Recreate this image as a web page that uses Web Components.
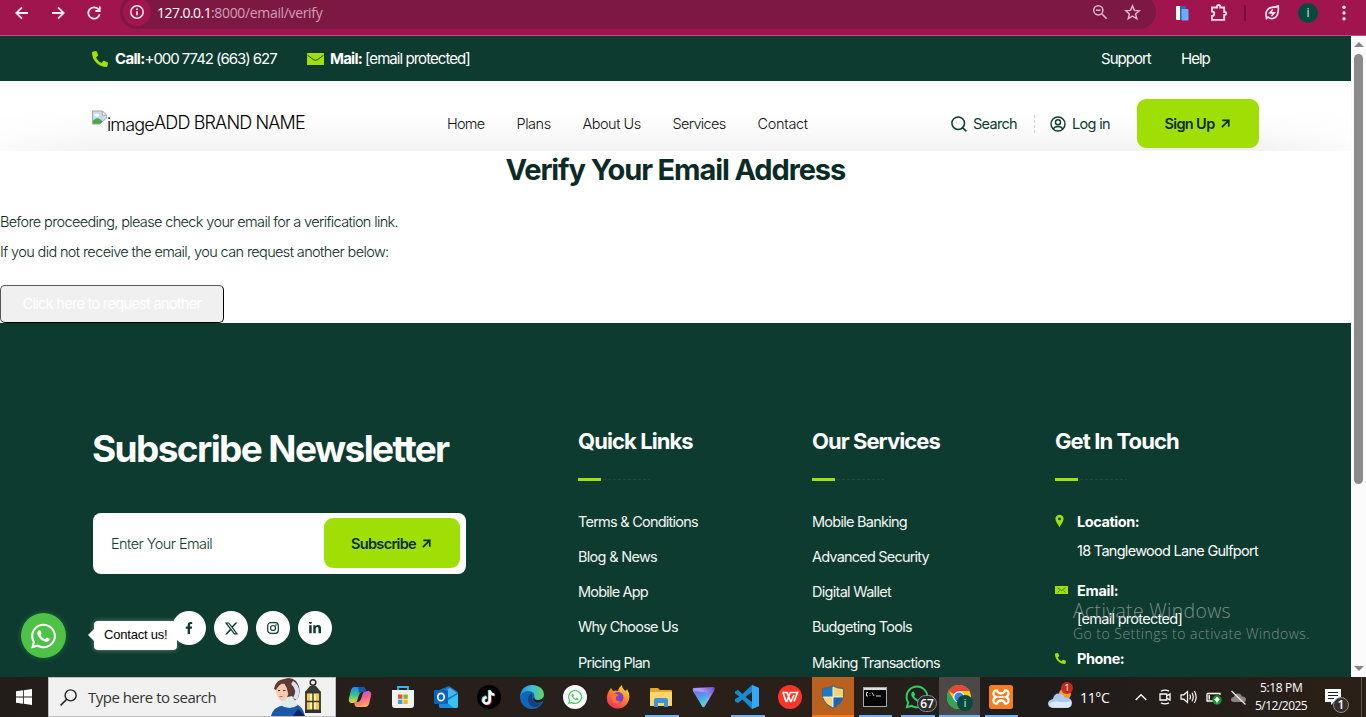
<!DOCTYPE html>
<html lang="en">
<head>
<meta charset="utf-8">
<title>Verify Your Email Address</title>
<style>
body{margin:0;width:1366px;height:717px;overflow:hidden;display:flex;flex-direction:column;font-family:Inter,"Liberation Sans",sans-serif;font-size:15px;color:#0b2b26}
main{display:flex;height:641px}
</style>
</head>
<body>
<browser-bar></browser-bar>
<main>
  <site-page></site-page>
  <scroll-rail></scroll-rail>
</main>
<task-bar></task-bar>
<script>
const WA='<path fill="currentColor" d="M380.9 97.1C339 55.1 283.2 32 223.9 32c-122.4 0-222 99.6-222 222 0 39.1 10.2 77.3 29.6 111L0 480l117.7-30.9c32.4 17.7 68.9 27 106.1 27h.1c122.3 0 224.1-99.6 224.1-222 0-59.3-25.2-115-67.1-157zm-157 341.6c-33.2 0-65.7-8.9-94-25.7l-6.7-4-69.8 18.3L72 359.2l-4.4-7c-18.5-29.4-28.2-63.3-28.2-98.2 0-101.7 82.8-184.5 184.6-184.5 49.3 0 95.6 19.2 130.4 54.1 34.8 34.9 56.2 81.2 56.1 130.5 0 101.8-84.9 184.6-186.6 184.6zm101.2-138.2c-5.5-2.8-32.8-16.2-37.9-18-5.1-1.9-8.8-2.8-12.5 2.8-3.7 5.6-14.3 18-17.6 21.8-3.2 3.7-6.5 4.2-12 1.4-32.6-16.3-54-29.1-75.5-66-5.7-9.8 5.7-9.1 16.3-30.3 1.8-3.7.9-6.9-.5-9.7-1.4-2.8-12.5-30.1-17.1-41.2-4.5-10.8-9.1-9.3-12.5-9.5-3.2-.2-6.9-.2-10.6-.2-3.7 0-9.7 1.4-14.8 6.9-5.1 5.6-19.4 19-19.4 46.3 0 27.3 19.9 53.7 22.6 57.4 2.8 3.7 39.1 59.7 94.8 83.8 35.2 15.2 49 16.5 66.6 13.9 10.7-1.6 32.8-13.4 37.4-26.4 4.6-13 4.6-24.1 3.2-26.4-1.3-2.5-5-3.9-10.5-6.6z"/>';
const line=(d,w=2)=>`<path d="${d}" fill="none" stroke="currentColor" stroke-width="${w}"/>`;
/* name: [viewBox, markup] */
const ICONS={
  back:['0 0 16 16',line('M14 8H2.5M8 2.3L2.3 8L8 13.7',1.8)],
  fwd:['0 0 16 16',line('M2 8h11.5M8 2.3L13.7 8L8 13.7',1.8)],
  reload:['0 0 16 16',line('M13.6 9.2A5.7 5.7 0 1 1 12.3 4.2L13.6 5.6M13.8 1.6V6H9.4',1.8)],
  info:['0 0 16 16','<circle cx="8" cy="8" r="6.2" fill="none" stroke="currentColor" stroke-width="1.5"/><path d="M8 7.2v4M8 4.4v1.6" stroke="currentColor" stroke-width="1.7"/>'],
  zoomout:['0 0 16 16','<circle cx="6.3" cy="6.3" r="4.6" fill="none" stroke="currentColor" stroke-width="1.5"/><path d="M4 6.3h4.6M9.7 9.7l5 5" stroke="currentColor" stroke-width="1.6"/>'],
  star:['0 0 16 16',line('M8 1.8L9.8 6L14.4 6.4L10.9 9.4L12 13.9L8 11.5L4 13.9L5.1 9.4L1.6 6.4L6.2 6Z',1.4)],
  pages:['0 0 14 16','<rect x="1" y="1" width="9" height="14" rx="1" fill="#fff"/><path d="M5 1h6v3H7v11H5z" fill="#3566a8"/><rect x="6.5" y="4" width="7" height="11.5" rx="1" fill="#6cabff"/>'],
  puzzle:['0 0 18 18',line('M2 3.5H7V2.6a1.6 1.6 0 0 1 3.2 0V3.5H14.2V8h.6a1.5 1.5 0 0 1 0 3h-.6V15.8H2V12a2 2 0 0 0 0-4.5Z',1.8)],
  leaf:['0 0 18 18',line('M3 15C1 10 3 4 9 3.2Q13 3 16 1.8Q17 12 12 15Q8 17 4.5 14.2L2 16.6',1.9)+line('M9.9 5.6L6.6 9.4h5L8.3 13',1.8)],
  dots:['0 0 4 16','<g fill="currentColor"><circle cx="2" cy="2.3" r="1.7"/><circle cx="2" cy="8" r="1.7"/><circle cx="2" cy="13.7" r="1.7"/></g>'],
  phone:['0 0 512 512','<path transform="matrix(-1 0 0 1 512 0)" fill="currentColor" d="M493.4 24.6l-104-24c-11.3-2.6-22.9 3.3-27.5 13.9l-48 112c-4.2 9.8-1.4 21.3 6.9 28l60.6 49.6c-36 76.7-98.9 140.5-177.2 177.2l-49.6-60.6c-6.8-8.3-18.2-11.1-28-6.9l-112 48C3.9 366.5-2 378.1.6 389.4l24 104C27.1 504.2 36.7 512 48 512c256.1 0 464-207.5 464-464 0-11.2-7.7-20.9-18.6-23.4z"/>'],
  mail:['0 0 17 12','<rect width="17" height="12" rx=".6" fill="currentColor"/><path d="M.5 2.3L6.5 6.6Q8.5 8 10.5 6.6L16.5 2.3" fill="none" stroke="#0d3b30" stroke-width=".9"/>'],
  envelope:['0 0 13 8','<rect width="13" height="8" fill="currentColor"/><path d="M2.5 1.6L6.5 4.6L10.5 1.6M2.5 6.4L4.6 4.6M10.5 6.4L8.4 4.6" fill="none" stroke="#38701f" stroke-width=".9"/>'],
  pin:['0 0 10 14','<path fill="currentColor" fill-rule="evenodd" d="M5 0a4.6 4.6 0 0 1 4.6 4.6C9.600 7.500 6.500 11 5 14C3.500 11 .4 7.500 .4 4.600A4.600 4.600 0 0 1 5 0zM5 3.100a1.600 1.600 0 1 0 0 3.200a1.600 1.600 0 0 0 0-3.200z"/>'],
  broken:['0 0 16 16','<path d="M.5 .5H11L15.500 5V8L8 14.500H.5Z" fill="#c6d9f5" stroke="#a3a3a3"/><path d="M1 14V11Q5 6 10 10L11 12L8.500 14Z" fill="#4fa83d"/><ellipse cx="5" cy="5" rx="2.700" ry="1.500" fill="#fff"/><path d="M11 .5V5H15.500Z" fill="#fff" stroke="#a3a3a3"/>'],
  search:['0 0 16 16','<circle cx="7.200" cy="7.200" r="6.300" fill="none" stroke="currentColor" stroke-width="1.500"/><path d="M11.700 11.700L15.400 15.400" stroke="currentColor" stroke-width="1.500"/>'],
  user:['0 0 16 16','<g fill="none" stroke="currentColor" stroke-width="1.400"><circle cx="8" cy="8" r="7"/><circle cx="8" cy="6.300" r="2.500"/><path d="M3.300 13Q4.500 10.500 8 10.500T12.700 13"/></g>'],
  arrow:['0 0 10 10',line('M1 9L8.400 1.700M1.500 1.500H8.600V8.500',1.900)],
  fb:['0 0 320 512','<path fill="currentColor" d="M279.140 288l14.220-92.660h-88.910v-60.130c0-25.350 12.420-50.060 52.240-50.060h40.420V6.260S260.430 0 225.360 0c-73.220 0-121.080 44.380-121.080 124.720v70.620H22.890V288h81.390v224h100.170V288z"/>'],
  x:['0 0 24 24','<path fill="currentColor" d="M18.244 2.250h3.308l-7.227 8.260 8.502 11.240H16.170l-5.214-6.817L4.990 21.750H1.680l7.730-8.835L1.254 2.250H8.080l4.713 6.231zm-1.161 17.520h1.833L7.084 4.126H5.117z"/>'],
  insta:['0 0 12 12','<g fill="none" stroke="currentColor" stroke-width="1.200"><rect x=".7" y=".7" width="10.600" height="10.600" rx="3"/><circle cx="6" cy="6" r="2.500"/></g><circle cx="9" cy="3" r=".8" fill="currentColor"/>'],
  linkedin:['0 0 448 448','<path fill="currentColor" d="M100.280 416H7.400V116.900h92.880zM53.790 76.100C24.090 76.100 0 51.500 0 21.800a53.790 53.790 0 0 1 107.580 0c0 29.700-24.100 54.300-53.790 54.300zM447.900 416h-92.680V270.400c0-34.700-.7-79.200-48.290-79.200-48.290 0-55.690 37.700-55.690 76.700V416h-92.780V116.900h89.080v40.800h1.300c12.400-23.500 42.690-48.300 87.880-48.300 94 0 111.280 61.900 111.280 142.300V416z"/>'],
  wa:['0 20 448 470',WA],
  win:['0 0 16 16','<path fill="#fff" d="M0 2.300L7 1.300V7.600H0ZM7.800 1.200L16 0V7.600H7.800ZM0 8.400H7V14.700L0 13.700ZM7.800 8.400H16V16L7.800 14.800Z"/>'],
  find:['0 0 16 16','<circle cx="10" cy="6" r="5.200" fill="none" stroke="#222" stroke-width="1.300"/><path d="M6.300 9.700L.6 15.400" stroke="#222" stroke-width="1.400"/>'],
  nurse:['0 0 64 38','<path d="M10 3Q18 -3 25 3Q31 11 27 20L21 25Q11 22 12 14Z" fill="#5b382f"/><path d="M22 3Q32 9 26 22L22 20Q27 12 20 6Z" fill="#d9e2f4"/><path d="M0 38Q2 29 13 27L22 24Q32 28 34 38Z" fill="#1d57a7"/><path d="M12 20L21 18L27 27Q19 33 9 27Z" fill="#dcebec"/><path d="M5 9Q8 4 14 6L18 12Q17 22 11 23Q7 22 6 16L4.500 15Z" fill="#f4cbb2"/><path d="M3 11Q5 1 14 1Q23 3 21 18L17 15Q16 9 13 5Q8 6 5 12Z" fill="#5f3a31"/><path d="M7 12.500h2M12 12.500h2.500" stroke="#49352f"/><path d="M8.500 18.500h3" stroke="#c95f57"/><path d="M22 38L27 31L34 38Z" fill="#10235f"/><circle cx="42" cy="4.500" r="2.800" fill="none" stroke="#2a2a2a" stroke-width="1.500"/><path d="M34 14L39 8H45L50 14Z" fill="#3a3a3a"/><rect x="35" y="14.500" width="14" height="18" fill="#f5c554" stroke="#333" stroke-width="1.800"/><rect x="39" y="16" width="6" height="15" fill="#fff0a9"/><path d="M42 15V33M35 23.500H49" stroke="#3a3528" stroke-width="1.400"/><rect x="34" y="32" width="16" height="3" fill="#303030"/>'],
  copilot:['0 0 24 24','<defs><linearGradient id="a" x2="0" y2="1"><stop stop-color="#1b8cf0"/><stop offset=".5" stop-color="#35c28a"/><stop offset="1" stop-color="#ffd23a"/></linearGradient><linearGradient id="b" x2=".3" y2="1"><stop stop-color="#9b61e8"/><stop offset=".5" stop-color="#f2599b"/><stop offset="1" stop-color="#ffa45a"/></linearGradient></defs><path d="M6 2H15Q17 2 17.500 5L18 7H14Q12 7 11 10L9 16Q8 18 5 18H3Q0 17 1 13L3 5Q4 2 6 2Z" fill="url(#a)"/><path d="M18 22H9Q7 22 6.500 19L6 17H10Q12 17 13 14L15 8Q16 6 19 6H21Q24 7 23 11L21 19Q20 22 18 22Z" fill="url(#b)"/><path d="M10 2H15Q17 2 18 7H14Q12 7 11 8Z" fill="#1755b5"/>'],
  store:['0 0 24 24','<path d="M7 6V2H17V6" fill="none" stroke="#36b5ef" stroke-width="1.800"/><path d="M1 5H23V20Q23 23 20 23H4Q1 23 1 20Z" fill="#f1f1f1"/><path fill="#e9512c" d="M7 9.500h4.400v4.300H7z"/><path fill="#80b927" d="M12.400 9.500h4.400v4.300h-4.400z"/><path fill="#2ca5e8" d="M7 14.700h4.400V19H7z"/><path fill="#f4b61c" d="M12.400 14.700h4.400V19h-4.400z"/>'],
  outlook:['0 0 24 24','<path d="M5 5L15 1L24 7V21Q24 23 22 23H7Q5 23 5 21Z" fill="#1675cb"/><path d="M8 7L16 3L23 8L14 13Z" fill="#48b8eb"/><path d="M6 20L24 9V21Q24 23 22 23H7Z" fill="#39c0f2"/><path d="M5 12L20 23H7Q5 23 5 21Z" fill="#198edb"/><rect y="5" width="14" height="14" rx="1" fill="#0b65bd"/><ellipse cx="7" cy="12" rx="3.200" ry="3.700" fill="none" stroke="#fff" stroke-width="1.700"/>'],
  tiktok:['0 0 24 24','<circle cx="12" cy="12" r="12" fill="#000"/><g fill="none" stroke-width="2.300"><path d="M12 5V15A3.200 3.200 0 1 1 9 11.700M12 5Q12.500 9 17 9.300" stroke="#25e5e0"/><path d="M13.600 6V16A3.200 3.200 0 1 1 10.400 12.800M13.600 6Q14 10 18 10.300" stroke="#f52d55"/><path d="M12.800 5.500V15.500A3.200 3.200 0 1 1 9.600 12.300M12.800 5.500Q13.300 9.500 17.400 9.700" stroke="#fff"/></g>'],
  edge:['0 0 24 24','<defs><linearGradient id="a"><stop stop-color="#238fdb"/><stop offset=".5" stop-color="#35c1dc"/><stop offset="1" stop-color="#6ad34c"/></linearGradient></defs><circle cx="12" cy="12" r="12" fill="#1267b5"/><path d="M0 11Q2 0 12.500 0Q24 1 24 10Q23 16 16 15Q13 14.500 14.500 12Q15 6 8 6Q3 6 0 11Z" fill="url(#a)"/><path d="M12 8Q5 13 10 20Q16 25 22 18Q13 20 12 12Z" fill="#153f85"/><path d="M14.500 12Q11.500 14 15 17Q19 19 23 16Q24 15 24 12Q20 17 14.500 14Z" fill="#231d1a"/>'],
  wacircle:['0 0 24 24','<circle cx="12" cy="12" r="12" fill="#fff"/><g color="#43cb62" transform="translate(5 4) scale(.0315)">'+WA+'</g>'],
  firefox:['0 0 24 24','<defs><linearGradient id="a" x1=".8" x2=".2" y2="1"><stop stop-color="#ffe43b"/><stop offset=".45" stop-color="#ff8527"/><stop offset="1" stop-color="#f52466"/></linearGradient></defs><path d="M5 3L7 6Q10 5 12 6Q13 2 16 0Q16 4 20 6L21 4Q26 12 21 19Q16 25 8 23Q0 20 1 12Q1 8 5 3Z" fill="url(#a)"/><circle cx="12" cy="12.500" r="5.500" fill="#7542d1"/><path d="M5 10Q8 7 13 10L10 12Q9 17 15 16Q11 20 7 17Z" fill="#ff7433"/>'],
  folder:['0 0 24 24','<path d="M1 4Q1 3 2 3H9L11 5H22Q23 5 23 6V21H1Z" fill="#e8a824"/><path d="M1 7H23V20Q23 21 22 21H2Q1 21 1 20Z" fill="#ffd66d"/><path d="M5 22V15Q5 13 7 13H17Q19 13 19 15V22H15V18H9V22Z" fill="#3e94d7"/>'],
  proton:['0 0 24 24','<defs><linearGradient id="a" x1="1" x2="0" y2=".7"><stop stop-color="#6a45cc"/><stop offset=".5" stop-color="#b29aff"/><stop offset="1" stop-color="#7f9cf5"/></linearGradient><linearGradient id="b" x2=".4" y2="1"><stop stop-color="#7d6ae8"/><stop offset=".5" stop-color="#4f9fe6"/><stop offset="1" stop-color="#3fe0cf"/></linearGradient></defs><path d="M2 3L21 2Q24 2 22 6L13 21Q11 24 9.500 20L1 6Q0 3 2 3Z" fill="url(#a)"/><path d="M1.500 6L15 7.500Q18 8 17 10L11.500 21Q10.500 23 9.500 20Z" fill="url(#b)"/>'],
  vscode:['0 0 24 24','<path d="M17 0L24 3V21L17 24L7.500 14.500L3 18L0 16.500V14L4.500 11.500L0 8.500V6.500L3 5L7.500 9Z" fill="#168bd2"/><path d="M17 7L10.500 12L17 17Z" fill="#241f1c"/><path d="M17 0L24 3V21L17 24Z" fill="#35a9ef"/>'],
  wps:['0 0 24 24','<circle cx="12" cy="12" r="12" fill="#fb3528"/><path d="M4.500 7.500H9L12.500 16.500H13L16 10M5 7.500L8 16.500H8.700L12.300 7.500H19.500L16 16.500" fill="none" stroke="#fff" stroke-width="1.700"/>'],
  shield:['0 0 24 24','<path d="M12 0Q17 3 23 3V10Q22 19 12 24Q2 19 1 10V3Q7 3 12 0Z" fill="#59636b"/><path d="M12 1.500V12H2V4Q7 4 12 1.500Z" fill="#1e78c8"/><path d="M12 1.500V12H22V4Q17 4 12 1.500Z" fill="#f7d370"/><path d="M12 12H2.200Q3.500 18.500 12 22.500Z" fill="#f9d777"/><path d="M12 12H21.800Q20.500 18.500 12 22.500Z" fill="#1867b4"/><path d="M12 2V22M2 12H22" stroke="#fff" stroke-width=".8"/>'],
  cmd:['0 0 24 24','<rect x=".5" y="2.500" width="23" height="19" fill="#050505" stroke="#aaa"/><path d="M1 3H23V5H1Z" fill="#ddd"/><path d="M5 7.500H3.500V11H5M7 8v.7M7 10v.7M9 7.500L11 11M13 11H18" stroke="#eee" fill="none" stroke-width=".9"/>'],
  chrome:['0 0 24 24','<circle cx="12" cy="12" r="12" fill="#f9c91e"/><path d="M12 12L1.600 6A12 12 0 0 1 22.400 6H12Z" fill="#e7463b"/><path d="M12 12V24A12 12 0 0 1 1.600 6L7 15Z" fill="#31a457"/><circle cx="12" cy="12" r="5.800" fill="#fff"/><circle cx="12" cy="12" r="4.600" fill="#3c80ee"/>'],
  xampp:['0 0 24 24','<rect width="24" height="24" rx="2.500" fill="#f57e20"/><path d="M8 5.500Q4.500 5 4.500 8.500Q4.500 11 7 12Q4.500 13 4.500 15.500Q4.500 19 8 18.500Q9 15.500 12 15.500T16 18.500Q19.500 19 19.500 15.500Q19.500 13 17 12Q19.500 11 19.500 8.500Q19.500 5 16 5.500Q15 8.500 12 8.500T8 5.500Z" fill="none" stroke="#fff" stroke-width="2.300"/><path d="M9.500 12H14.500" stroke="#fff" stroke-width="2"/>'],
  weather:['0 0 26 24','<circle cx="18" cy="9" r="6" fill="#f29c23"/><path d="M5 23Q1 22 1 18.500T6 14Q7 8 12.500 8.500Q17 9 18 13Q24 12 25 17.500Q25 22 21 23Z" fill="#aac9f5"/><path d="M2 19Q6 15 13 17Q20 18 24 16Q25 22 20 22.500H6Q3 22 2 19Z" fill="#deebff"/>'],
  chev:['0 0 12 8',line('M.7 7L6 1.700L11.300 7',1.400)],
  cam:['0 0 14 16',line('M2 5H8.700V11H2ZM8.700 7L12 5V11L8.700 9M3 2.200Q7 .2 11 2.200M3 13.800Q7 15.800 11 13.800',1.300)],
  sound:['0 0 18 16',line('M1 5.800H3.800L7.500 2.500V13.500L3.800 10.200H1ZM9.700 5.500Q11.200 8 9.700 10.500M12 3.700Q14.500 8 12 12.300M14.300 2Q18 8 14.300 14',1.200)],
  batt:['0 0 16 15','<path d="M1 3.500H14V5M1 3.500V11H8" fill="none" stroke="#fff" stroke-width="1.300"/><path fill="#fff" d="M2.500 5h1.500v4.500H2.500z"/><circle cx="11" cy="10" r="4.700" fill="#16942c"/><path d="M11 7L13.300 9.700L11 12L8.700 9.700ZM11 9V13.500" fill="#fff" stroke="#fff" stroke-width=".7"/>'],
  cloud:['0 0 17 15','<path d="M4 12Q1 12 1 9.500T4 7Q5 3 8.500 3.500Q11 3.700 12 6.500Q16 6.500 16 9.500T13 12Z" fill="#898583"/><path d="M1.500 1L15.500 14.500" stroke="#eee" stroke-width="1.300"/>'],
  note:['0 0 16 16','<path d="M0 0H16V13H9L6 16V13H0Z" fill="#fff"/><path d="M3 3.500H13M3 6.500H13M3 9.500H9" stroke="#231d1a" stroke-width="1.200"/>']
};

class Base extends HTMLElement{
  connectedCallback(){
    if(this.shadowRoot)return;
    this.attachShadow({mode:'open'});
    const t=document.createElement('template');
    t.innerHTML=this.view();
    this.shadowRoot.appendChild(t.content.cloneNode(true));
    this.ready&&this.ready();
  }
  at(n,d=''){return this.getAttribute(n)??d}
}

class UiIcon extends Base{
  view(){
    const [box,body]=ICONS[this.at('name')];
    return `<style>:host{display:block;flex:none;width:${this.at('w')}px;height:${this.at('h')||this.at('w')}px}svg{display:block;width:100%;height:100%}</style><svg viewBox="${box}" aria-hidden="true">${body}</svg>`;
  }
}

/* A single line of text, tracked so that its glyphs span the width given in "w". */
class FitText extends Base{
  view(){return `<style>:host{display:inline-block;flex:none;white-space:nowrap;text-align:left;width:${this.at('w')}px}span{display:inline-block;white-space:nowrap}</style><span><slot></slot></span>`}
  ready(){
    const s=this.shadowRoot.querySelector('span');
    const n=Math.max(1,this.textContent.length-1);
    s.style.letterSpacing=(+this.at('w')+.7-s.getBoundingClientRect().width)/n+'px';
  }
}

class BrowserBar extends Base{
  view(){return `<style>
  :host{display:flex;box-sizing:border-box;height:36px;flex:none;background:#a1154f;border-bottom:1px solid #b5527c;color:#fbe6ef;font-family:"Open Sans","Noto Sans",sans-serif;overflow:hidden}
  .row{display:flex;align-items:center;height:25px;width:100%}
  .nav{display:flex;gap:20px;padding-left:14px;width:106px;box-sizing:border-box}
  .pill{display:flex;align-items:center;width:1036px;height:34px;margin-top:-1px;border-radius:17px;background:#7d1842;box-sizing:border-box;padding:0 15px 0 3px;font-size:14px;color:#cfa0b6}
  .i{display:grid;place-items:center;width:28px;height:28px;border-radius:50%;background:#a1154f;color:#fbe6ef;margin-right:6px}
  b{font-weight:400;color:#fff;display:flex}
  .end{margin-left:auto;display:flex;gap:16px;color:#dcb9ca}
  .tools{display:flex;align-items:center;flex:1}
  .sep{width:2px;height:16px;background:#730d39;margin:0 18px 0 16px}
  .av{display:grid;place-items:center;width:20px;height:20px;border-radius:50%;background:#064a3e;font-size:12px;line-height:20px;color:#d6eee8;margin:0 24px 0 18px}
  </style><div class="row"><div class="nav"><ui-icon name="back" w="16"></ui-icon><ui-icon name="fwd" w="16"></ui-icon><ui-icon name="reload" w="16"></ui-icon></div>
  <div style="width:14px"></div>
  <div class="pill"><span class="i"><ui-icon name="info" w="16"></ui-icon></span><b><fit-text w="54">127.0.0.1</fit-text></b><fit-text w="111">:8000/email/verify</fit-text>
  <div class="end"><ui-icon name="zoomout" w="16"></ui-icon><ui-icon name="star" w="17"></ui-icon></div></div>
  <div class="tools"><ui-icon name="pages" w="14" h="16" style="margin:0 21px 0 19px"></ui-icon><ui-icon name="puzzle" w="18"></ui-icon><span class="sep"></span><ui-icon name="leaf" w="16" h="17"></ui-icon><span class="av">i</span><ui-icon name="dots" w="4" h="16"></ui-icon></div></div>`}
}

class ScrollRail extends Base{
  view(){return `<style>:host{display:flex;flex-direction:column;align-items:center;box-sizing:border-box;width:15px;height:641px;background:#fbfbfb;padding:6px 0}
  .u,.d{border:5px solid transparent;border-top:0;border-bottom:5px solid #858585}.d{border-bottom:0;border-top:5px solid #858585;margin-top:auto}
  .t{width:9px;height:430px;border-radius:5px;background:#8b8b8b;margin-top:7px}</style><i class="u"></i><div class="t"></div><i class="d"></i>`}
}

class TopBar extends Base{
  view(){return `<style>:host{display:flex;align-items:center;box-sizing:border-box;height:45px;background:#0d3b30;color:#fff;padding:0 141px 0 92px;line-height:24px}
  ui-icon{color:#9fe006}b{display:flex}nav{display:flex;gap:30px;margin-left:auto}</style>
  <ui-icon name="phone" w="16" style="margin-right:7px"></ui-icon><b><fit-text w="29.5">Call:</fit-text></b><fit-text w="132.5">+000 7742 (663) 627</fit-text>
  <ui-icon name="mail" w="17" h="12" style="margin:0 6px 0 30px"></ui-icon><b><fit-text w="32">Mail:</fit-text></b><fit-text w="105" style="margin-left:3px">[email protected]</fit-text>
  <nav><fit-text w="50">Support</fit-text><fit-text w="29">Help</fit-text></nav>`}
}

class LimeButton extends Base{
  view(){return `<style>:host{display:flex;align-items:center;justify-content:center;gap:6px;background:#9fdf06;border-radius:9px;color:#0b2b26;font-weight:600;font-size:14.5px;box-sizing:border-box;padding-right:2px}</style><slot></slot><ui-icon name="arrow" w="9"></ui-icon>`}
}

class SiteHeader extends Base{
  view(){return `<style>:host{display:flex;align-items:center;box-sizing:border-box;height:70px;padding:16px 92px 0;background:linear-gradient(90deg,rgba(255,255,255,.7),transparent 7%,transparent 93%,rgba(255,255,255,.7)),linear-gradient(#fff 40%,#fafafa 75%,#f2f2f2);color:#111}
  .brand{display:flex;font-size:18px;line-height:22px;font-weight:350;color:#000;width:355px;height:26px}
  .brand ui-icon{margin-top:-1px}
  nav{display:flex;gap:32px;font-size:14.500px;line-height:18px;font-weight:350}
  .act{display:flex;align-items:center;margin:-1px 0 0 auto;font-size:14.500px;color:#0d3b30}
  .sep{height:18px;border-left:1px dashed #cfd5d3;margin:0 15px 0 17px}
  lime-button{width:122px;height:49px;margin-left:27px}</style>
  <div class="brand"><ui-icon name="broken" w="15" h="16"></ui-icon><fit-text w="47" style="margin-top:3px">image</fit-text><fit-text w="151" style="margin-top:1px">ADD BRAND NAME</fit-text></div>
  <nav><fit-text w="37.5">Home</fit-text><fit-text w="34">Plans</fit-text><fit-text w="58">About Us</fit-text><fit-text w="53">Services</fit-text><fit-text w="50">Contact</fit-text></nav>
  <div class="act"><ui-icon name="search" w="16" style="margin-right:6px"></ui-icon><fit-text w="44">Search</fit-text><span class="sep"></span><ui-icon name="user" w="16" style="margin-right:6px"></ui-icon><fit-text w="38">Log in</fit-text><lime-button><fit-text w="50">Sign Up</fit-text></lime-button></div>`}
}

class VerifyPanel extends Base{
  view(){return `<style>:host{display:flex;flex-direction:column;height:172px;background:#fff;color:#0b2b26}
  h1{margin:0 0 19px;height:37px;line-height:37px;font-size:29px;text-align:center}
  p{margin:0;line-height:30px;height:30px;font-size:14.500px;font-weight:350}
  button{margin:18px 0 0;box-sizing:border-box;width:224px;height:38px;padding:0;border:1px solid;border-color:#555 #000 #000 #555;border-radius:5px;background:#f0f0f0;color:#fff;font:15px/24px Inter,sans-serif}</style>
  <h1><fit-text w="340">Verify Your Email Address</fit-text></h1>
  <p><fit-text w="398">Before proceeding, please check your email for a verification link.</fit-text></p>
  <p><fit-text w="388.500">If you did not receive the email, you can request another below:</fit-text></p>
  <button><fit-text w="179">Click here to request another</fit-text></button>`}
}

class SocialDot extends Base{
  view(){return `<style>:host{display:grid;place-items:center;width:34px;height:34px;border-radius:50%;background:#fff;color:#0d3b30}</style><ui-icon name="${this.at('name')}" w="${this.at('w')}" h="${this.at('h','12')}"></ui-icon>`}
}

class NewsLetter extends Base{
  view(){return `<style>:host{display:block}
  h2{margin:0;height:45px;line-height:45px;font-size:37px;color:#fff}
  form{display:flex;align-items:center;justify-content:space-between;box-sizing:border-box;width:373px;height:61px;margin:42px 0 37px 1px;padding:0 6px 1px 18px;border-radius:8px;background:#fff;color:#0d3b30;font-size:14.500px;font-weight:350}
  lime-button{width:136px;height:50px}
  .s{display:flex;gap:8px;padding-left:80px}</style>
  <h2><fit-text w="357.500">Subscribe Newsletter</fit-text></h2>
  <form><fit-text w="101">Enter Your Email</fit-text><lime-button><fit-text w="65">Subscribe</fit-text></lime-button></form>
  <div class="s"><social-dot name="fb" w="8"></social-dot><social-dot name="x" w="15" h="15"></social-dot><social-dot name="insta" w="12"></social-dot><social-dot name="linkedin" w="12"></social-dot></div>`}
}

class FootColumn extends Base{
  view(){return `<style>:host{display:block;color:#fff}h3{margin:0 0 22px;height:30px;line-height:30px;font-size:22px}
  .r{display:flex;align-items:center;gap:2px;height:3px;margin-bottom:23px}.r i{width:23px;height:3px;background:#9fe006}.r u{width:47px;height:1px;background:repeating-linear-gradient(90deg,#24493f 0 3px,transparent 3px 5px)}</style>
  <h3><fit-text w="${this.at('w')}">${this.at('heading')}</fit-text></h3><div class="r"><i></i><u></u></div><slot></slot>`}
}

class LinkList extends Base{
  view(){
    const rows=this.at('items').split('|').map(r=>{const [t,w]=r.split('=');return `<li><fit-text w="${w}">${t.replace('&','&amp;')}</fit-text></li>`}).join('');
    return `<style>ul{margin:0;padding:0;list-style:none;color:#f3f7f5}li{height:35.160px;line-height:35px;font-size:14.500px}</style><ul>${rows}</ul>`;
  }
}

class ContactItem extends Base{
  view(){return `<style>:host{display:grid;grid-template-columns:22px auto;margin-top:var(--gap,11px);line-height:29px;height:58px;font-size:14.500px}b,div{display:block;height:29px}ui-icon{color:#9fe006;margin-top:${this.at('top')}px}</style>
  <ui-icon name="${this.at('icon')}" w="${this.at('iw')}" h="${this.at('ih')}"></ui-icon><section><b><fit-text w="${this.at('w')}">${this.at('label')}</fit-text></b><div style="margin-top:${this.at('shift','0')}px"><slot></slot></div></section>`}
}

class SiteFooter extends Base{
  view(){return `<style>:host{display:grid;grid-template-columns:486px 234px 243px auto;box-sizing:border-box;height:354px;padding:103px 0 0 92px;background:#0d3b30;overflow:hidden}</style>
  <news-letter></news-letter>
  <foot-column heading="Quick Links" w="115"><link-list items="Terms &amp; Conditions=120|Blog &amp; News=79|Mobile App=70|Why Choose Us=100|Pricing Plan=72"></link-list></foot-column>
  <foot-column heading="Our Services" w="128"><link-list items="Mobile Banking=95|Advanced Security=117|Digital Wallet=79|Budgeting Tools=100|Making Transactions=128"></link-list></foot-column>
  <foot-column heading="Get In Touch" w="124">
    <contact-item style="--gap:26px" icon="pin" iw="9" ih="14" top="7" label="Location:" w="62"><fit-text w="181">18 Tanglewood Lane Gulfport</fit-text></contact-item>
    <contact-item icon="envelope" iw="13" ih="8" top="10" label="Email:" w="41" shift="-1"><fit-text w="105">[email protected]</fit-text></contact-item>
    <contact-item style="--gap:10px" icon="phone" iw="11" ih="11" top="9" label="Phone:" w="47"></contact-item>
  </foot-column>`}
}

class ChatBubble extends Base{
  view(){return `<style>:host{position:absolute;left:21px;top:577px;display:flex;align-items:center;gap:28px}
  .c{display:grid;place-items:center;width:45px;height:45px;border-radius:50%;background:#4dc247;color:#fff;box-shadow:0 0 6px #4dc24755}
  .t{position:relative;width:83px;height:29px;border-radius:4px;background:#fff;color:#000;font:13px/27px "Liberation Sans",sans-serif;text-align:center;box-shadow:0 0 5px #fff6}
  .t:before{content:"";position:absolute;left:-6px;top:8px;border:6px solid transparent;border-right-color:#fff;border-left:0}</style>
  <div class="c"><ui-icon name="wa" w="25" h="26"></ui-icon></div><div class="t"><fit-text w="63">Contact us!</fit-text></div>`}
}

class ActivateMark extends Base{
  view(){return `<style>:host{position:absolute;left:1073px;top:561px;color:#8f9b98;opacity:.85;font-family:"Open Sans","Noto Sans",sans-serif;font-weight:350}
  div{font-size:19.500px;line-height:28px;height:25px}p{margin:0;font-size:14px;line-height:23px}</style><div><fit-text w="157">Activate Windows</fit-text></div><p><fit-text w="236">Go to Settings to activate Windows.</fit-text></p>`}
}

class SitePage extends Base{
  view(){return `<style>:host{display:block;position:relative;width:1351px;height:641px;overflow:hidden}</style><top-bar></top-bar><site-header></site-header><verify-panel></verify-panel><site-footer></site-footer><chat-bubble></chat-bubble><activate-mark></activate-mark>`}
}

class TaskItem extends Base{
  view(){return `<style>:host{position:relative;display:grid;place-items:center;height:40px;width:${this.at('w','43')}px;background:${this.at('bg','none')}}
  ui-icon{margin-left:-1px}
  .l{position:absolute;bottom:0;left:${this.at('full')?0:5}px;right:${this.at('full')?0:4}px;height:2px;background:${this.at('line','none')}}</style><ui-icon name="${this.at('name')}" w="24"></ui-icon><i class="l"></i><slot></slot>`}
}

class TaskBar extends Base{
  view(){return `<style>:host{display:flex;align-items:center;height:40px;flex:none;background:linear-gradient(90deg,#231d1a,#28201a 45%,#2a2019 60%,#1f1c1b 75%,#2a2017);color:#fff;font-family:"Open Sans","Noto Sans",sans-serif}
  .start{display:grid;place-items:center;width:48px}
  .q{display:flex;align-items:center;box-sizing:border-box;width:288px;height:40px;border:1px solid #bdbdbd;background:#f1f1f1;color:#333;padding-left:11px;font-size:15px;margin-right:3px}
  .q fit-text{margin-left:11px}.q .n{margin-left:55px}
  .badge{position:absolute;display:grid;place-items:center;border-radius:10px;font-weight:600}
  .num{left:21px;top:18px;width:18px;height:15px;background:#2c2c2c;border:1px solid #8b8b8b;font-size:12px;line-height:15px}
  .pi{left:18px;top:18px;width:16px;height:16px;background:#064a3e;font-size:10px;line-height:16px;font-weight:400}
  .w{position:relative;margin-left:25px}.one{right:0;top:-3px;width:12px;height:12px;background:#c42b1c;font-size:9px;line-height:12px;font-weight:400}
  .deg{font-size:14px;margin:0 26px 0 7px}
  .tray{display:flex;align-items:center;gap:8px}
  .clock{display:flex;flex-direction:column;align-items:center;font-size:12px;line-height:18px;margin-left:8px}
  .nt{position:relative;margin-left:18px}.cnt{left:8px;top:8px;width:14px;height:14px;border:1px solid #8d8d8d;background:#35302d;font-size:12px;line-height:14px}
  .edge{height:40px;border-left:1px solid #5b5552;margin-left:auto;width:4px}</style>
  <div class="start"><ui-icon name="win" w="16"></ui-icon></div>
  <div class="q"><ui-icon name="find" w="17"></ui-icon><fit-text w="128">Type here to search</fit-text><ui-icon class="n" name="nurse" w="64" h="38"></ui-icon></div>
  <task-item name="copilot"></task-item><task-item name="store"></task-item><task-item name="outlook"></task-item><task-item name="tiktok"></task-item><task-item name="edge"></task-item><task-item name="wacircle"></task-item><task-item name="firefox"></task-item><task-item name="folder" line="#6fb1f2"></task-item><task-item name="proton"></task-item><task-item name="vscode" line="#6fb1f2"></task-item><task-item name="wps"></task-item>
  <task-item name="shield" w="42" bg="#b9621f" full="1" line="#ff7a12"></task-item><task-item name="cmd" w="42" line="#6fb1f2"></task-item>
  <task-item name="wa" w="43" line="#6fb1f2" style="color:#2bd366"><span class="badge num" style="color:#fff">67</span></task-item>
  <task-item name="chrome" w="41" bg="#4b4948" full="1" line="#6fb1f2"><span class="badge pi">i</span></task-item><task-item name="xampp" w="42" line="#6fb1f2"></task-item>
  <div class="w"><ui-icon name="weather" w="26" h="24"></ui-icon><span class="badge one">1</span></div><fit-text class="deg" w="29">11°C</fit-text>
  <div class="tray"><ui-icon name="chev" w="12" h="8" style="margin-right:3px"></ui-icon><ui-icon name="cam" w="14" h="16"></ui-icon><ui-icon name="sound" w="18" h="16"></ui-icon><ui-icon name="batt" w="16" h="15"></ui-icon><ui-icon name="cloud" w="17" h="15"></ui-icon></div>
  <div class="clock"><fit-text w="42">5:18 PM</fit-text><fit-text w="52">5/12/2025</fit-text></div>
  <div class="nt"><ui-icon name="note" w="16"></ui-icon><span class="badge cnt">1</span></div><div class="edge"></div>`}
}

for(const [n,c] of Object.entries({'browser-bar':BrowserBar,'scroll-rail':ScrollRail,'site-page':SitePage,'top-bar':TopBar,'site-header':SiteHeader,'verify-panel':VerifyPanel,'site-footer':SiteFooter,'news-letter':NewsLetter,'foot-column':FootColumn,'link-list':LinkList,'contact-item':ContactItem,'social-dot':SocialDot,'lime-button':LimeButton,'chat-bubble':ChatBubble,'activate-mark':ActivateMark,'task-bar':TaskBar,'task-item':TaskItem,'ui-icon':UiIcon,'fit-text':FitText}))customElements.define(n,c);
</script>
</body>
</html>
